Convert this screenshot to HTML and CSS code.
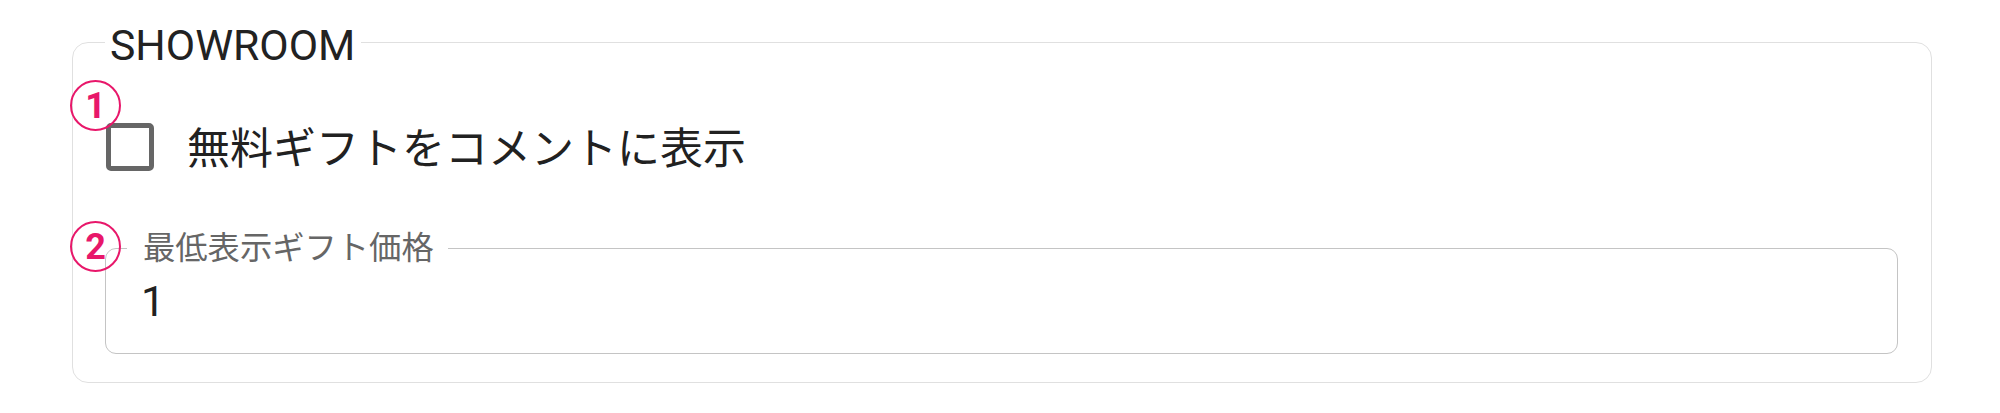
FILE: index.html
```html
<!DOCTYPE html>
<html lang="ja">
<head>
    <meta charset="UTF-8">
    <meta name="viewport" content="width=device-width, initial-scale=1.0">
    <title>SHOWROOM</title>
    <link rel="stylesheet" href="styles.css">
</head>
<body>

    <div class="page">
        <fieldset class="group">
            <legend class="group-title">SHOWROOM</legend>

            <label class="check-row" for="free-gift">
                <input type="checkbox" id="free-gift">
                <span class="check-box"></span>
                <span class="check-text">無料ギフトをコメントに表示</span>
            </label>

            <fieldset class="field">
                <legend class="field-label">最低表示ギフト価格</legend>
                <div class="field-value">1</div>
            </fieldset>
        </fieldset>

        <!-- annotation marks -->
        <span class="mark mark-1">1</span>
        <span class="mark mark-2">2</span>
    </div>

</body>
</html>
```

FILE: styles.css
```css
body {
    margin: 0;
    padding: 0;
    background: #fff;
    font-family: Roboto, "Noto Sans CJK JP", sans-serif;
    color: #212121;
}

.page {
    position: relative;
    padding: 15px 68px 0 72px;
}

.group {
    margin: 0;
    padding: 0 33px 28px 32px;
    border: 1px solid #e0e0e0;
    border-radius: 16px;
}

.group-title {
    padding: 5px 6px 0 5px;
    font-size: 42.7px;
    line-height: 50px;
    color: #222;
}

.check-row {
    display: flex;
    align-items: center;
    margin: 53px 0 0 1px;
    height: 48px;
    cursor: pointer;
}

.check-row input {
    display: none;
}

.check-box {
    box-sizing: border-box;
    width: 48px;
    height: 48px;
    border: 5px solid #666;
    border-radius: 5px;
    flex: none;
}

.check-text {
    margin-left: 33px;
    padding-top: 4px;
    font-size: 43px;
    line-height: 50px;
}

.field {
    margin: 58px 0 0 0;
    padding: 9px 32px 27px 21px;
    border: 1px solid #c4c4c4;
    border-radius: 11px;
}

.field-label {
    padding: 0 14px 0 16px;
    font-size: 32.3px;
    line-height: 38px;
    color: #666;
}

.field-value {
    padding-left: 14px;
    font-size: 42.7px;
    line-height: 50px;
}

.mark {
    position: absolute;
    box-sizing: border-box;
    width: 51px;
    height: 51px;
    border: 2px solid #e8176a;
    border-radius: 50%;
    display: flex;
    align-items: center;
    justify-content: center;
    font-size: 36px;
    font-weight: 700;
    color: #e8176a;
}

.mark-1 {
    left: 70px;
    top: 80px;
}

.mark-2 {
    left: 70px;
    top: 221px;
}
```
